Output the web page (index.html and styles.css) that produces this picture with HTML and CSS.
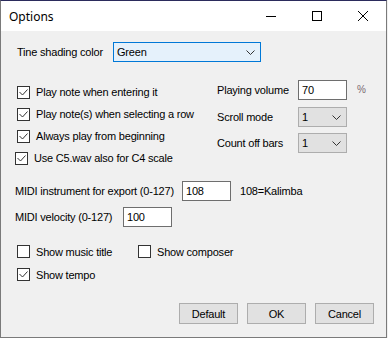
FILE: index.html
```html
<!DOCTYPE html>
<html lang="en">
<head>
  <meta charset="UTF-8">
  <title>Options</title>
  <link rel="stylesheet" href="styles.css">
</head>
<body>
  <div class="window">
    <div class="titlebar">
      <span class="title">Options</span>
      <div class="caption">
        <span class="cap"><svg width="10" height="10"><path d="M0 5.5h10" stroke="#000"/></svg></span>
        <span class="cap"><svg width="10" height="10"><rect x="0.5" y="0.5" width="9" height="9" fill="none" stroke="#000"/></svg></span>
        <span class="cap"><svg width="10" height="10"><path d="M0 0L10 10M10 0L0 10" stroke="#000"/></svg></span>
      </div>
    </div>

    <div class="content">
      <div class="shading">
        <span class="shading-label">Tine shading color</span>
        <div class="combo combo-active">Green
          <svg class="chevron" width="9" height="5"><path d="M0.5 0.5L4.5 4.5L8.5 0.5" fill="none" stroke="#333"/></svg>
        </div>
      </div>

      <div class="middle">
        <div class="checks">
          <div class="check"><span class="box"><svg width="11" height="11"><path d="M1.5 5L4.5 8L9.5 2.5" fill="none" stroke="#333"/></svg></span>Play note when entering it</div>
          <div class="check"><span class="box"><svg width="11" height="11"><path d="M1.5 5L4.5 8L9.5 2.5" fill="none" stroke="#333"/></svg></span>Play note(s) when selecting a row</div>
          <div class="check"><span class="box"><svg width="11" height="11"><path d="M1.5 5L4.5 8L9.5 2.5" fill="none" stroke="#333"/></svg></span>Always play from beginning</div>
          <div class="check shifted"><span class="box"><svg width="11" height="11"><path d="M1.5 5L4.5 8L9.5 2.5" fill="none" stroke="#333"/></svg></span>Use C5.wav also for C4 scale</div>
        </div>

        <div class="playback">
          <div class="pb-row">
            <span class="pb-label">Playing volume</span>
            <div class="textbox">70</div>
            <span class="percent">%</span>
          </div>
          <div class="pb-row pb-second">
            <span class="pb-label">Scroll mode</span>
            <div class="combo combo-small">1
              <svg class="chevron" width="9" height="5"><path d="M0.5 0.5L4.5 4.5L8.5 0.5" fill="none" stroke="#333"/></svg>
            </div>
          </div>
          <div class="pb-row pb-third">
            <span class="pb-label">Count off bars</span>
            <div class="combo combo-small">1
              <svg class="chevron" width="9" height="5"><path d="M0.5 0.5L4.5 4.5L8.5 0.5" fill="none" stroke="#333"/></svg>
            </div>
          </div>
        </div>
      </div>

      <div class="field instrument">
        <span class="instrument-label">MIDI instrument for export (0-127)</span>
        <div class="textbox">108</div>
        <span class="hint">108=Kalimba</span>
      </div>
      <div class="field velocity">
        <span class="velocity-label">MIDI velocity (0-127)</span>
        <div class="textbox">100</div>
      </div>

      <div class="show-row show-first">
        <div class="check show-title"><span class="box"></span>Show music title</div>
        <div class="check"><span class="box"></span>Show composer</div>
      </div>
      <div class="show-row">
        <div class="check"><span class="box"><svg width="11" height="11"><path d="M1.5 5L4.5 8L9.5 2.5" fill="none" stroke="#333"/></svg></span>Show tempo</div>
      </div>

      <div class="buttons">
        <button class="btn">Default</button>
        <button class="btn">OK</button>
        <button class="btn">Cancel</button>
      </div>
    </div>
  </div>
</body>
</html>
```

FILE: styles.css
```css
body {
  margin: 0;
  background-color: #f0f0f0;
  font-family: "Liberation Sans", Arial, sans-serif;
  font-size: 11px;
  letter-spacing: -0.2px;
  color: #000;
}

.window {
  width: 385px;
  height: 336px;
  border: 1px solid #7a7a7a;
  border-top-color: #2b2b5c;
  display: flex;
  flex-direction: column;
  background-color: #f0f0f0;
}

.titlebar {
  height: 30px;
  background-color: #fff;
  display: flex;
  align-items: center;
}

.title {
  font-family: "Noto Sans", sans-serif;
  font-size: 12px;
  letter-spacing: 0;
  padding-left: 8px;
  flex: 1;
}

.caption {
  display: flex;
  height: 30px;
}

.cap {
  width: 46px;
  display: flex;
  align-items: center;
  justify-content: center;
}

.cap svg {
  display: block;
}

.content {
  flex: 1;
  display: flex;
  flex-direction: column;
}

.shading {
  margin-top: 11px;
  padding-left: 16px;
  display: flex;
  align-items: center;
  height: 20px;
}

.shading-label {
  width: 96px;
}

.combo {
  position: relative;
  box-sizing: border-box;
  height: 20px;
  padding-left: 3px;
  display: flex;
  align-items: center;
  border: 1px solid #adadad;
  background-color: #e1e1e1;
}

.combo-active {
  width: 148px;
  border-color: #0078d7;
  background-color: #e5f1fb;
}

.combo-small {
  width: 49px;
}

.chevron {
  position: absolute;
  right: 5px;
  top: 7px;
}

.middle {
  margin-top: 18px;
  display: flex;
  height: 89px;
}

.checks {
  width: 200px;
  padding-left: 16px;
  padding-top: 1px;
}

.check {
  height: 22px;
  display: flex;
  align-items: center;
}

.check.shifted {
  margin-left: -2px;
}

.box {
  box-sizing: border-box;
  width: 13px;
  height: 13px;
  border: 1px solid #333;
  background-color: #fff;
  margin-right: 6px;
  flex-shrink: 0;
}

.box svg {
  display: block;
}

.pb-row {
  height: 20px;
  display: flex;
  align-items: center;
}

.pb-second {
  margin-top: 7px;
}

.pb-third {
  margin-top: 6px;
}

.pb-label {
  width: 81px;
}

.textbox {
  box-sizing: border-box;
  width: 49px;
  height: 20px;
  padding-left: 3px;
  display: flex;
  align-items: center;
  border: 1px solid #6e6e6e;
  background-color: #fff;
}

.percent {
  margin-left: 10px;
  font-size: 10px;
  color: #7a6a70;
  padding-bottom: 1px;
}

.field {
  height: 20px;
  display: flex;
  align-items: center;
  padding-left: 14px;
}

.instrument {
  margin-top: 12px;
}

.instrument-label {
  width: 167px;
}

.hint {
  margin-left: 9px;
}

.velocity {
  margin-top: 6px;
}

.velocity-label {
  width: 108px;
}

.show-row {
  display: flex;
  padding-left: 16px;
}

.show-row .check {
  height: 23px;
}

.show-first {
  margin-top: 13px;
}

.show-title {
  width: 121px;
}

.buttons {
  margin-top: 17px;
  padding-right: 12px;
  display: flex;
  justify-content: flex-end;
  gap: 9px;
}

.btn {
  box-sizing: border-box;
  width: 59px;
  height: 21px;
  padding: 0;
  font-family: "Liberation Sans", Arial, sans-serif;
  font-size: 11px;
  letter-spacing: -0.2px;
  color: #000;
  border: 1px solid #adadad;
  background-color: #e1e1e1;
}
```
